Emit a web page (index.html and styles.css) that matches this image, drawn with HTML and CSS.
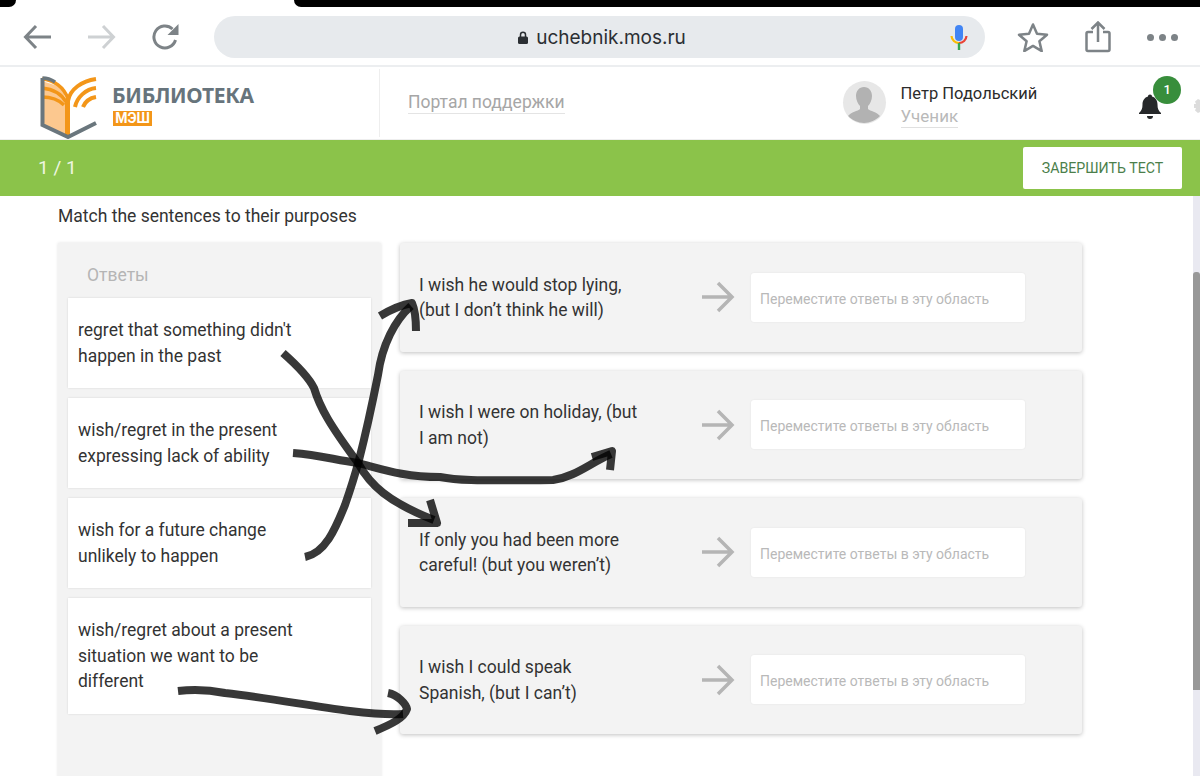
FILE: index.html
```html
<!DOCTYPE html>
<html lang="ru">
<head>
  <meta charset="UTF-8" />
  <title>Библиотека МЭШ - тест</title>
  <link rel="stylesheet" href="styles.css">
</head>
<body>

<div class="screen">
  <div class="notch">
    <div class="notch-left"></div>
    <div class="notch-right"></div>
  </div>

  <div class="toolbar">
    <svg class="ic ic-back" width="30" height="26" viewBox="0 0 30 26"><path d="M28 13H3M13 2 2.500 13 13 24" fill="none" stroke="#7d8387" stroke-width="3"/></svg>
    <svg class="ic ic-forward" width="30" height="26" viewBox="0 0 30 26"><path d="M2 13h25M17 2l10.500 11L17 24" fill="none" stroke="#ced1d3" stroke-width="3"/></svg>
    <svg class="ic ic-reload" width="28" height="28" viewBox="0 0 28 28"><path d="M23.500 17a11 11 0 1 1-3-11" fill="none" stroke="#7d8387" stroke-width="3"/><path d="M26.500 1v11h-11z" fill="#7d8387"/></svg>
    <div class="urlbar">
      <svg width="10" height="13" viewBox="0 0 10 13"><path d="M2.500 6V3.800a2.500 2.500 0 0 1 5 0V6" fill="none" stroke="#2b2f33" stroke-width="1.500"/><rect y="5.500" width="10" height="7.500" rx="1.500" fill="#2b2f33"/></svg>
      <span class="url-text">uchebnik.mos.ru</span>
      <svg class="mic" width="18" height="26" viewBox="0 0 18 26"><rect x="5" y="0" width="8" height="16" rx="4" fill="#4285f4"/><path d="M1.500 11a7.500 7.500 0 0 0 7.500 7" fill="none" stroke="#fbbc05" stroke-width="2.200"/><path d="M9 18a7.500 7.500 0 0 0 7.500-7" fill="none" stroke="#ea4335" stroke-width="2.200"/><path d="M9 18v7" stroke="#34a853" stroke-width="2.400"/></svg>
    </div>
    <svg class="ic ic-star" width="32" height="30" viewBox="0 0 32 30"><path d="M16 2.500l4 9.300 10 .9-7.600 6.600 2.300 9.800L16 23.900l-8.700 5.200 2.300-9.800L2 12.700l10-.9z" fill="none" stroke="#7d8387" stroke-width="2.500" stroke-linejoin="round"/></svg>
    <svg class="ic ic-share" width="26" height="32" viewBox="0 0 26 32"><path d="M8 11H3a1.500 1.500 0 0 0-1.500 1.500v16A1.500 1.500 0 0 0 3 30h20a1.500 1.500 0 0 0 1.500-1.500v-16A1.500 1.500 0 0 0 23 11h-5" fill="none" stroke="#7d8387" stroke-width="2.500"/><path d="M13 21V2M6.500 8 13 1.500 19.500 8" fill="none" stroke="#7d8387" stroke-width="2.500"/></svg>
    <div class="dots"><i></i><i></i><i></i></div>
  </div>

  <header class="site-header">
    <div class="brand">
      <svg class="logo" width="58" height="64" viewBox="0 0 58 64">
        <path d="M2 6 24 13 28 62 2 50z" fill="#fcc88f"/>
        <path d="M2 4C14 5 24 12 28 24M2 13C12 14 21 18 26 27M2 22C10 22 18 24 24 30" fill="none" stroke="#f39619" stroke-width="3.500"/>
        <path d="M28 60V26C30 14 42 6 56 4M35 32C37 22 46 14 56 13M43 32C45 27 50 23 56 22" fill="none" stroke="#f39619" stroke-width="4"/>
        <path d="M27.500 24V60" stroke="#f39619" stroke-width="5"/>
        <path d="M2.500 3V50L28 62 56 48" fill="none" stroke="#6a767d" stroke-width="4"/>
        <path d="M2.500 3C8 3 12 5 15 7" fill="none" stroke="#6a767d" stroke-width="3.500"/>
      </svg>
      <div class="brand-text">
        <div class="brand-name">БИБЛИОТЕКА</div>
        <div class="brand-tag">МЭШ</div>
      </div>
    </div>
    <a class="support">Портал поддержки</a>
    <div class="avatar">
      <svg width="42" height="42" viewBox="0 0 42 42"><path d="M21 6c5 0 8 4 8 9 0 4-2 8-4 10v3c2 2 9 3 12 7-4 4-10 7-16 7S9 39 5 35c3-4 10-5 12-7v-3c-2-2-4-6-4-10 0-5 3-9 8-9z" fill="#b2b2b2"/></svg>
    </div>
    <div class="user">
      <div class="user-name">Петр Подольский</div>
      <div class="user-role"><span>Ученик</span></div>
    </div>
    <div class="bell">
      <svg width="24" height="26" viewBox="0 0 24 26"><path d="M12 1.500c1.300 0 2 .8 2 2 3.500 1 5.500 4 5.500 8 0 4 .8 6 3.500 8.500v1H1v-1c2.700-2.500 3.500-4.500 3.500-8.500 0-4 2-7 5.500-8 0-1.200.7-2 2-2z" fill="#26282a"/><path d="M9 23a3 3 0 0 0 6 0z" fill="#26282a"/></svg>
      <span class="bell-badge">1</span>
    </div>
    <svg class="gear" width="14" height="18" viewBox="0 0 14 18"><path d="M7 0h7v18H7v-3.500L4 16 1 13.500 2 11H0V7h2L1 4.500 4 2l3 1.500z" fill="#dcdcdc"/></svg>
  </header>

  <div class="testbar">
    <span class="counter">1 / 1</span>
    <button class="finish">ЗАВЕРШИТЬ ТЕСТ</button>
  </div>

  <main class="content">
    <p class="question">Match the sentences to their purposes</p>
    <div class="match">
      <aside class="answers">
        <div class="answers-title">Ответы</div>
        <div class="answer">regret that something didn't happen in the past</div>
        <div class="answer">wish/regret in the present expressing lack of ability</div>
        <div class="answer">wish for a future change unlikely to happen</div>
        <div class="answer answer-tall">wish/regret about a present situation we want to be different</div>
      </aside>
      <section class="rows">
        <div class="row">
          <div class="row-text">I wish he would stop lying, (but I don’t think he will)</div>
          <svg class="row-arrow" width="34" height="34" viewBox="0 0 34 34"><path d="M1 17h30M17 3l14 14-14 14" fill="none" stroke="#b5b5b5" stroke-width="3.500"/></svg>
          <div class="drop">Переместите ответы в эту область</div>
        </div>
        <div class="row">
          <div class="row-text">I wish I were on holiday, (but I am not)</div>
          <svg class="row-arrow" width="34" height="34" viewBox="0 0 34 34"><path d="M1 17h30M17 3l14 14-14 14" fill="none" stroke="#b5b5b5" stroke-width="3.500"/></svg>
          <div class="drop">Переместите ответы в эту область</div>
        </div>
        <div class="row">
          <div class="row-text">If only you had been more careful! (but you weren’t)</div>
          <svg class="row-arrow" width="34" height="34" viewBox="0 0 34 34"><path d="M1 17h30M17 3l14 14-14 14" fill="none" stroke="#b5b5b5" stroke-width="3.500"/></svg>
          <div class="drop">Переместите ответы в эту область</div>
        </div>
        <div class="row">
          <div class="row-text">I wish I could speak Spanish, (but I can’t)</div>
          <svg class="row-arrow" width="34" height="34" viewBox="0 0 34 34"><path d="M1 17h30M17 3l14 14-14 14" fill="none" stroke="#b5b5b5" stroke-width="3.500"/></svg>
          <div class="drop">Переместите ответы в эту область</div>
        </div>
      </section>
    </div>
  </main>

  <div class="scrollbar"><div class="scroll-thumb"></div></div>

  <!-- hand drawn answer lines on top of the page -->
  <svg class="scribble" width="1200" height="776" viewBox="0 0 1200 776">
    <g fill="none" stroke="#000" stroke-opacity=".78" stroke-width="8" stroke-linejoin="round">
      <path d="M283 353C300 368 309 378 314 388 320 408 330 425 358 463 370 485 388 502 434 520"/>
      <path d="M430 500 437 523 408 523"/>
      <path d="M293 453C320 455 335 460 358 463 385 470 405 477 440 477 455 480 470 481 553 480 575 477 590 463 611 454"/>
      <path d="M592 457 612 451 610 470"/>
      <path d="M305 557C325 553 335 530 345 505 352 485 355 475 359 460 368 425 373 400 378 375 382 345 395 320 411 306"/>
      <path d="M380 316C390 310 400 305 412 303 416 312 416 322 416 331"/>
      <path d="M178 691C195 689 210 690 225 693 270 698 310 706 350 711 375 714 390 715 403 714"/>
      <path d="M388 693C398 695 406 704 407 709 404 718 392 724 375 731"/>
    </g>
  </svg>
</div>

</body>
</html>
```

FILE: styles.css
```css
* {
  box-sizing: border-box;
}
html, body {
  margin: 0;
  height: 100%;
  overflow: hidden;
}
body {
  font-family: Roboto, 'Noto Sans', sans-serif;
  color: #333;
  background: #fff;
}
.screen {
  position: relative;
  height: 776px;
  overflow: hidden;
}

/* device top edge */
.notch {
  display: flex;
  justify-content: space-between;
  height: 7px;
}
.notch-left {
  width: 16px;
  background: #000;
  border-bottom-right-radius: 7px;
}
.notch-right {
  width: 906px;
  background: #000;
  border-bottom-left-radius: 7px;
}

/* browser toolbar */
.toolbar {
  display: flex;
  align-items: center;
  height: 60px;
  padding: 2px 0 0 23px;
  border-bottom: 2px solid #eceef0;
}
.toolbar svg {
  flex: none;
}
.ic-forward {
  margin-left: 33px;
}
.ic-reload {
  margin-left: 36px;
}
.urlbar {
  display: flex;
  align-items: center;
  justify-content: center;
  gap: 8px;
  position: relative;
  flex: none;
  width: 771px;
  height: 42px;
  margin-left: 34px;
  padding-left: 5px;
  border-radius: 21px;
  background: #e7eaed;
}
.url-text {
  font-family: 'Inter', Roboto, sans-serif;
  font-size: 19px;
  color: #2b2f33;
}
.mic {
  position: absolute;
  right: 17px;
  top: 9px;
}
.ic-star {
  margin-left: 32px;
}
.ic-share {
  margin-left: 36px;
}
.dots {
  display: flex;
  gap: 5px;
  margin-left: 36px;
}
.dots i {
  width: 7px;
  height: 7px;
  border-radius: 50%;
  background: #7d8387;
}

/* site header */
.site-header {
  display: flex;
  align-items: center;
  height: 73px;
  border-bottom: 1px solid #eee;
}
.site-header > * {
  flex: none;
}
.brand {
  display: flex;
  align-items: center;
  width: 380px;
  height: 68px;
  padding-left: 40px;
  border-right: 1px solid #eee;
}
.logo {
  margin-top: 7px;
}
.brand-text {
  margin-left: 14px;
  margin-top: 3px;
}
.brand-name {
  font-family: 'Noto Sans', sans-serif;
  font-size: 21px;
  font-weight: 700;
  line-height: 24px;
  color: #67747c;
  letter-spacing: -0.3px;
}
.brand-tag {
  width: 39px;
  height: 15px;
  margin: 4px 0 0 1px;
  font-size: 14px;
  font-weight: 700;
  line-height: 15px;
  text-align: center;
  color: #fff;
  background: #f39619;
}
.support {
  margin-left: 28px;
  font-size: 17.500px;
  line-height: 21px;
  color: #a6a6a6;
  border-bottom: 1px solid #e4e4e4;
}
.avatar {
  width: 43px;
  height: 43px;
  margin: -1px 0 0 278px;
  border-radius: 50%;
  overflow: hidden;
  background: #e7e7e7;
}
.user {
  margin-left: 15px;
  margin-top: 4px;
}
.user-name {
  font-size: 16.500px;
  line-height: 22px;
  color: #2c2c2c;
}
.user-role {
  font-size: 17px;
  line-height: 22px;
  color: #b9b9b9;
}
.user-role span {
  display: inline-block;
  border-bottom: 1px solid #e0e0e0;
}
.bell {
  position: relative;
  width: 24px;
  height: 26px;
  margin-left: 101px;
  margin-top: 6px;
}
.bell-badge {
  position: absolute;
  left: 15px;
  top: -17px;
  width: 28px;
  height: 28px;
  border-radius: 50%;
  font-size: 13px;
  font-weight: 500;
  line-height: 28px;
  text-align: center;
  color: #fff;
  background: #388e3c;
}
.gear {
  margin-left: 32px;
  margin-top: 6px;
}

/* test bar */
.testbar {
  display: flex;
  align-items: center;
  justify-content: space-between;
  height: 56px;
  padding: 0 18px 0 38px;
  background: #8bc34a;
}
.counter {
  margin-top: -2px;
  font-size: 19px;
  color: #eef6e2;
}
.finish {
  width: 159px;
  height: 42px;
  padding: 0;
  border: none;
  border-radius: 2px;
  font-family: Roboto, sans-serif;
  font-size: 14.200px;
  color: #4b7f4b;
  background: #fff;
}

/* task */
.content {
  padding: 0 0 0 58px;
}
.question {
  margin: 9px 0 16px;
  font-size: 17.500px;
  line-height: 22px;
  color: #333;
}
.match {
  display: flex;
  gap: 19px;
  align-items: flex-start;
}
.answers {
  width: 323px;
  height: 560px;
  padding: 0 10px;
  background: #f3f3f3;
  box-shadow: 0 0 3px rgb(0 0 0 / 0.12);
}
.answers-title {
  height: 55px;
  padding: 21px 0 0 19px;
  font-size: 17.500px;
  line-height: 22px;
  color: #b5b5b5;
}
.answer {
  display: flex;
  align-items: center;
  height: 90px;
  margin-bottom: 10px;
  padding: 1px 50px 0 10px;
  font-size: 17.500px;
  line-height: 25.500px;
  color: #333;
  background: #fff;
  box-shadow: 0 0 2px rgb(0 0 0 / 0.12);
}
.answer-tall {
  height: 116px;
}
.rows {
  display: flex;
  flex-direction: column;
  gap: 19px;
  width: 682px;
}
.row {
  display: flex;
  align-items: center;
  height: 108.500px;
  padding-left: 19px;
  border-radius: 3px;
  background: #f3f3f3;
  box-shadow: 0 1px 4px rgb(0 0 0 / 0.25);
}
.row-text {
  width: 221px;
  padding-top: 2px;
  font-size: 17.500px;
  line-height: 25.500px;
  color: #333;
}
.row-arrow {
  margin-left: 61px;
  flex: none;
}
.drop {
  width: 274px;
  height: 49px;
  margin-left: 16px;
  padding-left: 9px;
  border-radius: 3px;
  font-size: 14px;
  line-height: 52px;
  color: #b9b9b9;
  background: #fff;
  box-shadow: 0 0 2px rgb(0 0 0 / 0.08);
}

/* overlays */
.scrollbar {
  position: absolute;
  top: 196px;
  right: 0;
  bottom: 0;
  width: 7px;
  background: #e9e9f1;
}
.scroll-thumb {
  margin-top: 76px;
  height: 418px;
  border-radius: 3px 3px 0 0;
  background: #989898;
}
.scribble {
  position: absolute;
  top: 0;
  left: 0;
  pointer-events: none;
}
```
